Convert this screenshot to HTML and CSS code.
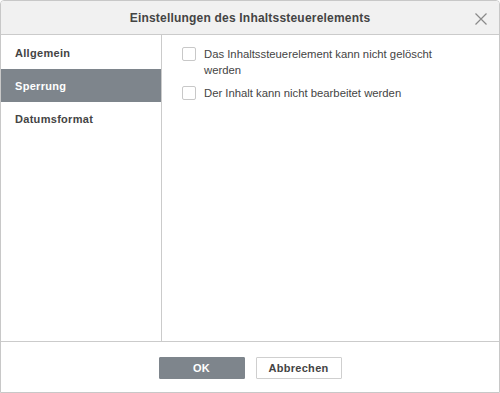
FILE: index.html
```html
<!DOCTYPE html>
<html lang="de">
<head>
  <meta charset="UTF-8">
  <title>Einstellungen des Inhaltssteuerelements</title>
  <link rel="stylesheet" href="styles.css">
</head>
<body>
  <div class="dialog">
    <div class="header">
      <span class="title">Einstellungen des Inhaltssteuerelements</span>
      <span class="close">
        <svg width="12" height="12" viewBox="0 0 12 12">
          <path d="M0.5 0.5 L11.5 11.5 M11.5 0.5 L0.5 11.5" stroke="#8a8a8a" stroke-width="1.2" fill="none"/>
        </svg>
      </span>
    </div>
    <div class="body">
      <div class="sidebar">
        <div class="tab">Allgemein</div>
        <div class="tab active">Sperrung</div>
        <div class="tab">Datumsformat</div>
      </div>
      <div class="content">
        <label class="check">
          <span class="box"></span>
          <span class="text">Das Inhaltssteuerelement kann nicht gelöscht werden</span>
        </label>
        <label class="check">
          <span class="box"></span>
          <span class="text">Der Inhalt kann nicht bearbeitet werden</span>
        </label>
      </div>
    </div>
    <div class="footer">
      <button class="btn primary">OK</button>
      <button class="btn">Abbrechen</button>
    </div>
  </div>
</body>
</html>
```

FILE: styles.css
```css
body {
  margin: 0;
  font-family: "Liberation Sans", Arial, sans-serif;
  color: #444;
  background: #fff;
}
.dialog {
  width: 500px;
  height: 393px;
  box-sizing: border-box;
  border: 1px solid #c8c8c8;
  border-radius: 4px 4px 0 0;
  display: flex;
  flex-direction: column;
  overflow: hidden;
}
.header {
  height: 33px;
  flex: none;
  background: #f1f1f1;
  border-bottom: 1px solid #cbcbcb;
  display: flex;
  align-items: center;
  justify-content: center;
  position: relative;
}
.title {
  font-size: 12px;
  font-weight: bold;
  letter-spacing: 0.2px;
  color: #444;
}
.close {
  position: absolute;
  right: 12px;
  top: 12px;
  width: 12px;
  height: 12px;
  display: flex;
}
.body {
  flex: 1;
  display: flex;
}
.sidebar {
  width: 160px;
  border-right: 1px solid #cbcbcb;
  padding-top: 1px;
}
.tab {
  height: 33px;
  display: flex;
  align-items: center;
  padding-left: 14px;
  font-size: 11px;
  font-weight: bold;
  letter-spacing: 0.3px;
  color: #444;
}
.tab.active {
  background: #7e858c;
  color: #fff;
}
.content {
  flex: 1;
  padding: 12px 0 0 20px;
}
.check {
  display: flex;
  align-items: flex-start;
  margin-bottom: 8px;
  width: 270px;
}
.box {
  width: 12px;
  height: 12px;
  border: 1px solid #c8c8c8;
  border-radius: 2px;
  flex: none;
  margin-right: 8px;
}
.text {
  font-size: 11.3px;
  line-height: 16px;
  margin-top: -1px;
  color: #444;
}
.footer {
  height: 51px;
  flex: none;
  border-top: 1px solid #cbcbcb;
  display: flex;
  justify-content: center;
  align-items: flex-start;
  gap: 11px;
  padding-top: 15px;
  box-sizing: border-box;
}
.btn {
  width: 86px;
  height: 22px;
  font-family: "Liberation Sans", Arial, sans-serif;
  font-size: 11px;
  font-weight: bold;
  letter-spacing: 0.3px;
  color: #444;
  background: #fff;
  border: 1px solid #cfcfcf;
  border-radius: 1px;
  padding: 0;
}
.btn.primary {
  background: #7e858c;
  border-color: #7e858c;
  color: #fff;
}
```
